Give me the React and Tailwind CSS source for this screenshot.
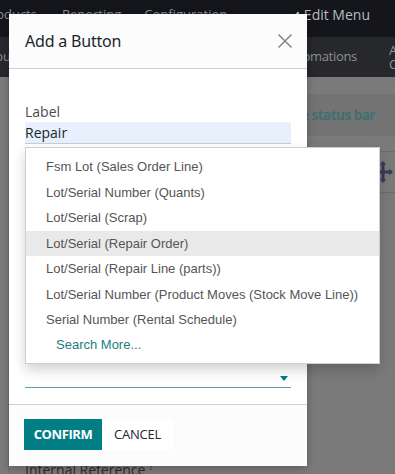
import React from "react";

const items = [
  "Fsm Lot (Sales Order Line)",
  "Lot/Serial Number (Quants)",
  "Lot/Serial (Scrap)",
  "Lot/Serial (Repair Order)",
  "Lot/Serial (Repair Line (parts))",
  "Lot/Serial Number (Product Moves (Stock Move Line))",
  "Serial Number (Rental Schedule)",
];

export default function App() {
  return (
    <div className="relative w-[395px] h-[474px] overflow-hidden bg-[#7b7b7b] font-['Open_Sans',sans-serif]">
      {/* background page */}
      <div className="flex flex-col h-full">
        <div className="h-[37px] bg-[#14161b] flex items-start pt-[5px] text-[13px] text-[#8d8f93] relative">
          <span className="ml-[-17px]">Products</span>
          <span className="ml-[25px]">Reporting</span>
          <span className="ml-[23px]">Configuration</span>
          <span className="ml-auto mr-[25px] flex items-center gap-[3px] text-[14px] text-[#b9bbbe] -mt-[1px]">
            <svg width="10" height="10" viewBox="0 0 10 10"><path d="M1 9 L1.5 7 L7 1.5 L8.5 3 L3 8.5 Z" fill="#b9bbbe" /></svg>
            Edit Menu
          </span>
        </div>
        <div className="h-[40px] bg-[#26282c] flex items-center text-[13px] text-[#8d8f93]">
          <span className="ml-[-12px]">Tours</span>
          <span className="ml-auto mr-[32px] tracking-[-0.3px]">Automations</span>
          <span className="leading-[14px] mr-[-4px] flex flex-col w-[10px] overflow-hidden"><span>A</span><span>C</span></span>
        </div>
        <div className="flex-1 flex flex-col ml-[8px] border-l border-[#707070] bg-[#7a7a7a]">
          <div className="mt-[17px] h-[42px] bg-[#737373] flex items-center justify-end pr-[20px] text-[13.5px] font-bold text-[#3f6f71] tracking-[-0.5px]">
            Show in the status bar
          </div>
          <div className="h-[15px]" />
          <div className="h-[42px] border-t border-b border-[#6c6c6c] flex items-center justify-end pr-[2px]">
            <svg width="16" height="22" viewBox="0 0 16 22">
              <path d="M6 1 L6 21 M1 11 L15 11" stroke="#3a3a57" strokeWidth="3" />
              <path d="M6 0 L9 4 L3 4 Z M6 22 L9 18 L3 18 Z M16 11 L12 8 L12 14 Z" fill="#3a3a57" />
            </svg>
          </div>
          <div className="flex-1" />
          <div className="pl-[16px] text-[14px] leading-[16px] text-[#2b2b2b] h-[12px]">Internal Reference <sup>?</sup></div>
        </div>
      </div>

      {/* modal */}
      <div className="absolute left-[9px] top-[14px] w-[298px] h-[452px] bg-white shadow-[0_2px_8px_rgba(0,0,0,0.25)] flex flex-col">
        <div className="h-[55px] bg-[#fcfcfc] border-b border-[#cfcfd3] flex items-center justify-between pl-[16px] pr-[14px]">
          <span className="text-[16px] text-[#212529] font-['Noto_Sans',sans-serif] tracking-[-0.2px]">Add a Button</span>
          <svg width="16" height="16" viewBox="0 0 16 16">
            <path d="M1.5 1.5 L14.5 14.5 M14.5 1.5 L1.5 14.5" stroke="#858585" strokeWidth="1.5" />
          </svg>
        </div>
        <div className="flex-1 flex flex-col px-[16px] pt-[33px] relative">
          <div className="text-[14px] leading-[20px] text-[#4c4c4c]">Label</div>
          <div className="h-[22px] bg-[#e8f0fe] border-b border-[#c9ced6] text-[14px] leading-[21px] text-[#212529]">Repair</div>
          <div className="flex-1" />
          <div className="mb-[16px] h-[18px] border-b border-[#5f9ea0] flex justify-end items-center pr-[3px]">
            <svg width="8" height="5" viewBox="0 0 8 5"><path d="M0 0 L8 0 L4 5 Z" fill="#017e84" /></svg>
          </div>
        </div>
        <div className="h-[62px] border-t border-[#cfcfd3] flex items-center pl-[15px] pb-[2px] bg-[#fcfcfc]">
          <button className="h-[31px] w-[78px] bg-[#017e84] text-white font-bold text-[13px] tracking-[-0.4px]">CONFIRM</button>
          <button className="h-[31px] w-[71px] bg-white text-[#1f2530] text-[13px] tracking-[-0.2px]">CANCEL</button>
        </div>
      </div>

      {/* dropdown */}
      <div className="absolute left-[25px] top-[147px] w-[355px] h-[217px] bg-white border border-[#cfcfcf] shadow-[0_6px_12px_rgba(0,0,0,0.18)] pt-[6px] font-['Liberation_Sans',Arial,sans-serif] text-[13px] text-[#555]">
        {items.map((t, i) => (
          <div key={i} className={`h-[25.5px] flex items-center pl-[20px] ${i === 3 ? "bg-[#e9e9e9]" : ""}`}>{t}</div>
        ))}
        <div className="h-[25px] flex items-center pl-[30px] text-[#1d7d7f]">Search More...</div>
      </div>
    </div>
  );
}
